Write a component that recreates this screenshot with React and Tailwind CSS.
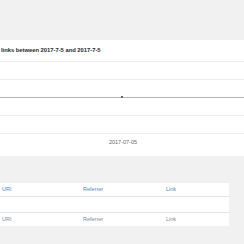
import React from 'react';

const gridRows = [0, 1, 2, 3];

const App = () => {
  return (
    <div className="w-[244px] h-[244px] overflow-hidden bg-[#f1f1f1] font-['Liberation_Sans',Arial,sans-serif]">
      <div className="h-[40px]" />

      {/* Chart panel */}
      <div className="bg-white h-[116px] flex flex-col">
        <div className="h-[22px] flex items-center border-b border-[#eeeeee] text-[5.8px] font-bold text-[#23282d] pl-[1px]">
          links between 2017-7-5 and 2017-7-5
        </div>
        <div className="relative flex flex-col pt-[17px]">
          {gridRows.map(i => (
            <div key={i} className={`h-[18px] border-t ${i === 1 ? 'border-[#b4b4b4]' : 'border-[#ececec]'}`} />
          ))}
          <div className="absolute left-[121px] top-[34px] w-[2px] h-[2px] bg-[#666]" />
        </div>
        <div className="text-center text-[5.5px] text-[#666] -mt-[13px] pl-[2px]">2017-07-05</div>
      </div>

      <div className="h-[27px]" />

      {/* Table */}
      <div className="bg-white w-[229px] text-[5.5px]">
        <div className="grid grid-cols-[81px_83px_1fr] h-[14px] items-center border-b border-[#e5e5e5] text-[#4f87b8] pl-[2px]">
          <span>URI</span>
          <span>Referrer</span>
          <span>Link</span>
        </div>
        <div className="h-[15px]" />
        <div className="grid grid-cols-[81px_83px_1fr] h-[14px] items-center border-t border-[#e5e5e5] text-[#7b8a98] pl-[2px]">
          <span>URI</span>
          <span>Referrer</span>
          <span>Link</span>
        </div>
      </div>
    </div>
  );
};

export default App;
